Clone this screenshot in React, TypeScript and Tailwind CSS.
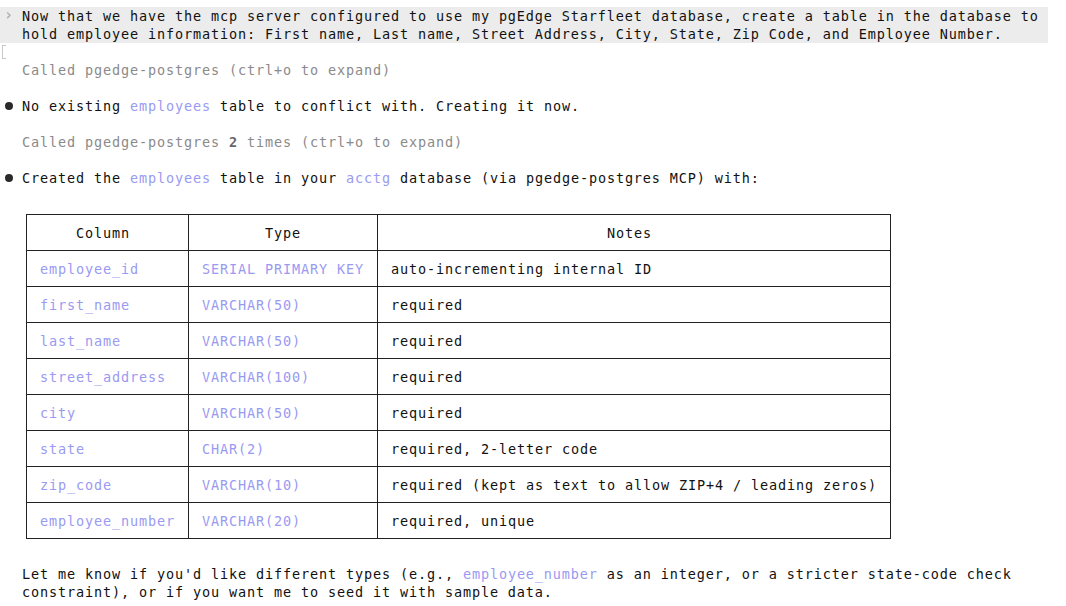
const P = ({ children }: { children: React.ReactNode }) => (
  <span className="text-[#9a9af2]">{children}</span>
);

const rows: [string, string, string][] = [
  ["employee_id", "SERIAL PRIMARY KEY", "auto-incrementing internal ID"],
  ["first_name", "VARCHAR(50)", "required"],
  ["last_name", "VARCHAR(50)", "required"],
  ["street_address", "VARCHAR(100)", "required"],
  ["city", "VARCHAR(50)", "required"],
  ["state", "CHAR(2)", "required, 2-letter code"],
  ["zip_code", "VARCHAR(10)", "required (kept as text to allow ZIP+4 / leading zeros)"],
  ["employee_number", "VARCHAR(20)", "required, unique"],
];

const Line = ({ children, className = "" }: { children?: React.ReactNode; className?: string }) => (
  <div className={`relative h-[18px] whitespace-pre pl-[22px] ${className}`}>{children}</div>
);

const Bullet = () => (
  <span className="absolute left-[5px] top-[5px] h-[8px] w-[8px] rounded-full bg-[#2a2a2a]" />
);

const App = () => {
  return (
    <div
      className="min-h-screen w-[1066px] bg-white pt-[7px] text-[13.5px] leading-[18px] tracking-[0.87px] text-[#111]"
      style={{ fontFamily: '"DejaVu Sans Mono", "Liberation Mono", monospace' }}
    >
      {/* user prompt */}
      <div className="relative w-[1048px] bg-[#ececec]">
        <span className="absolute left-[4px] top-[-1px] text-[15px] font-bold text-[#b0b0b0]">›</span>
        <Line>Now that we have the mcp server configured to use my pgEdge Starfleet database, create a table in the database to</Line>
        <Line>hold employee information: First name, Last name, Street Address, City, State, Zip Code, and Employee Number.</Line>
      </div>

      <div className="relative h-[18px]">
        <div className="absolute left-[2px] top-[2px] h-[14px] w-[4px] border-y border-l border-[#c8c8c8]" />
      </div>

      <Line className="text-[#8a8a8a]">Called pgedge-postgres (ctrl+o to expand)</Line>
      <Line />
      <Line>
        <Bullet />
        No existing <P>employees</P> table to conflict with. Creating it now.
      </Line>
      <Line />
      <Line className="text-[#8a8a8a]">
        Called pgedge-postgres <span className="font-bold text-[#666]">2</span> times (ctrl+o to expand)
      </Line>
      <Line />
      <Line>
        <Bullet />
        Created the <P>employees</P> table in your <P>acctg</P> database (via pgedge-postgres MCP) with:
      </Line>

      {/* table */}
      <div className="ml-[26px] mt-[27px] w-[865px] border-l border-t border-[#222]">
        <div className="flex h-[36px] border-b border-[#222]">
          <div className="flex w-[162px] items-center border-r border-[#222] pl-[49px]">Column</div>
          <div className="flex w-[189px] items-center border-r border-[#222] pl-[76px]">Type</div>
          <div className="flex w-[513px] items-center border-r border-[#222] pl-[229px]">Notes</div>
        </div>
        {rows.map(([c, t, n]) => (
          <div key={c} className="flex h-[36px] border-b border-[#222]">
            <div className="flex w-[162px] items-center whitespace-pre border-r border-[#222] pl-[13px] text-[#9a9af2]">{c}</div>
            <div className="flex w-[189px] items-center whitespace-pre border-r border-[#222] pl-[13px] text-[#9a9af2]">{t}</div>
            <div className="flex w-[513px] items-center whitespace-pre border-r border-[#222] pl-[13px]">{n}</div>
          </div>
        ))}
      </div>

      <div className="mt-[26px]">
        <Line>
          Let me know if you'd like different types (e.g., <P>employee_number</P> as an integer, or a stricter state-code check
        </Line>
        <Line>constraint), or if you want me to seed it with sample data.</Line>
      </div>
    </div>
  );
};

export default App;
